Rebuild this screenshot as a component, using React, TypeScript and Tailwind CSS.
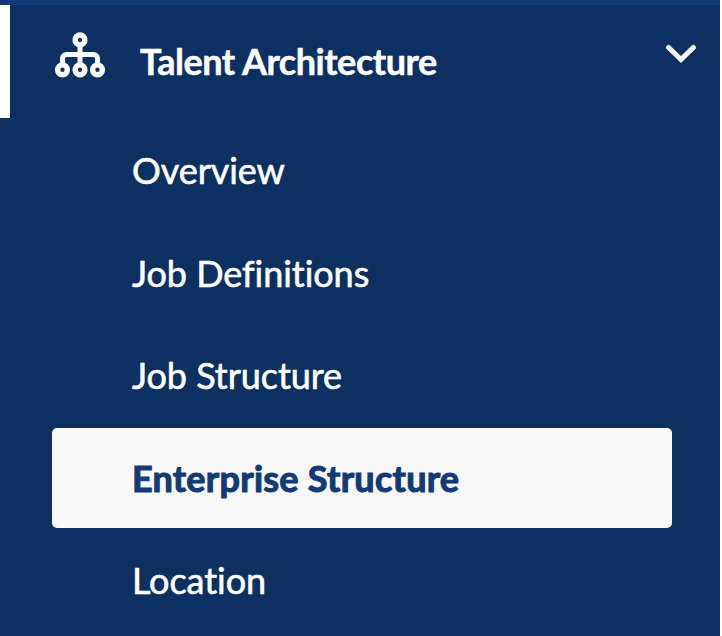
import clsx from "clsx"

const items = [
  { label: "Overview" },
  { label: "Job Definitions" },
  { label: "Job Structure" },
  { label: "Enterprise Structure", active: true },
  { label: "Location" },
]

function HierarchyIcon() {
  return (
    <svg width="52" height="48" viewBox="0 0 52 48" fill="none" stroke="currentColor" strokeWidth="5.4">
      <circle cx="26" cy="8.9" r="4.9" />
      <circle cx="8.5" cy="38.8" r="4.9" />
      <circle cx="26" cy="38.8" r="4.9" />
      <circle cx="43.5" cy="38.8" r="4.9" />
      <path d="M26 13.5V34M8.5 34V27.5a4 4 0 0 1 4-4h27a4 4 0 0 1 4 4V34" strokeWidth="5" />
    </svg>
  )
}

function Chevron() {
  return (
    <svg width="32" height="22" viewBox="0 0 32 22" fill="none" stroke="currentColor" strokeWidth="5.1" strokeLinecap="round">
      <path d="M3.6 4.5L16 16.5L28.4 4.5" />
    </svg>
  )
}

export default function App() {
  return (
    <div className="h-[636px] w-[722px] overflow-hidden bg-white font-['Lato',sans-serif] text-white antialiased [font-variant-ligatures:none]">
      <nav className="h-full w-[720px] border-t-[5px] border-[#113b75] bg-[#0c3062]">
        <button className="flex h-[113px] w-full items-start border-l-[10px] border-white pl-[44px] text-left">
          <span className="mt-[26px]"><HierarchyIcon /></span>
          <span className="mt-[32px] ml-[34px] flex-1 text-[36px] leading-[48px] font-bold tracking-[-0.45px] [-webkit-text-stroke:0.5px]">Talent Architecture</span>
          <span className="mt-[38px] mr-[23px]"><Chevron /></span>
        </button>
        <ul className="ml-[52px] w-[620px] pt-[2px]">
          {items.map((item) => (
            <li
              key={item.label}
              className={clsx(
                "mb-[2.5px] flex h-[100px] items-center rounded-[5px] pt-[0.6px] pl-[80px] text-[36px]",
                item.active
                  ? "bg-[#f8f8f8] font-bold tracking-[0.25px] text-[#113b75] [-webkit-text-stroke:1.1px]"
                  : "tracking-[-0.05px] [-webkit-text-stroke:0.6px]"
              )}
            >
              {item.label}
            </li>
          ))}
        </ul>
      </nav>
    </div>
  )
}
